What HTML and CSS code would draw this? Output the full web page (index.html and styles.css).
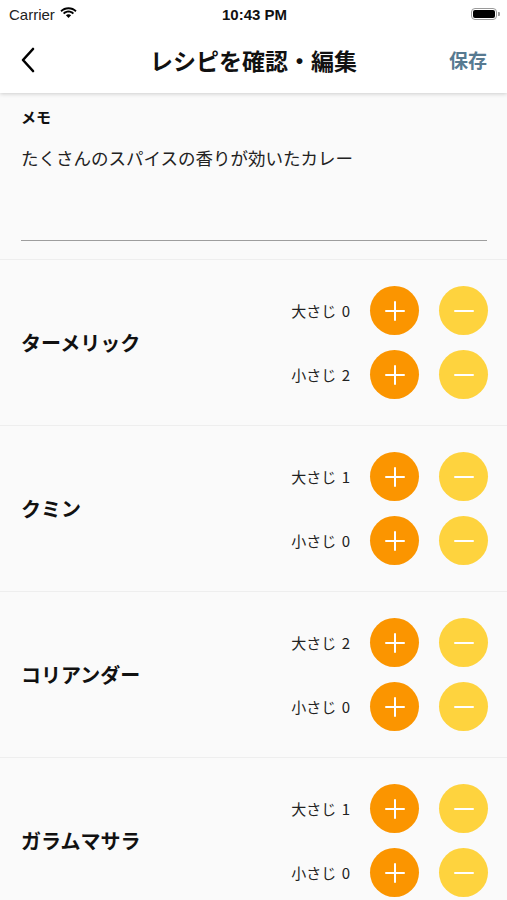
FILE: index.html
```html
<!DOCTYPE html>
<html>
  <head>
    <meta charset="utf-8">
    <link rel="stylesheet" href="styles.css">
  </head>
  <body>
    <div class="header">
      <div class="status-bar">
        <div class="carrier">
          Carrier
          <svg class="wifi" width="17" height="12" viewBox="0 0 17 12">
            <path d="M8.5 2.2c2.6 0 5 1 6.8 2.7l1.3-1.4C14.5 1.4 11.6 0.2 8.5 0.2S2.5 1.4 0.4 3.5l1.3 1.4C3.5 3.2 5.9 2.2 8.5 2.2z" fill="#000"/>
            <path d="M8.5 5.6c1.6 0 3.1 0.6 4.2 1.7l1.3-1.4C12.5 4.5 10.6 3.6 8.5 3.6S4.5 4.5 3 5.9l1.3 1.4C5.4 6.2 6.9 5.6 8.5 5.6z" fill="#000"/>
            <path d="M8.5 7.2c-1 0-1.9 0.4-2.6 1L8.5 11l2.6-2.8c-0.7-0.6-1.6-1-2.6-1z" fill="#000"/>
          </svg>
        </div>
        <div class="time">10:43 PM</div>
        <div class="battery">
          <span class="battery-body"><span class="battery-fill"></span></span>
          <span class="battery-tip"></span>
        </div>
      </div>
      <div class="nav-bar">
        <svg class="back" width="16" height="26" viewBox="0 0 16 26">
          <path d="M13 2L3 13l10 11" fill="none" stroke="#000" stroke-width="2.6" stroke-linecap="round" stroke-linejoin="round"/>
        </svg>
        <div class="nav-title">レシピを確認・編集</div>
        <div class="nav-save">保存</div>
      </div>
    </div>

    <div class="memo">
      <div class="memo-label">メモ</div>
      <div class="memo-field">たくさんのスパイスの香りが効いたカレー</div>
    </div>

    <div class="spice">
      <div class="spice-name">ターメリック</div>
      <div class="amounts">
        <div class="amount">
          <span class="amount-label">大さじ 0</span>
          <button class="btn btn-plus"><span class="bar-h"></span><span class="bar-v"></span></button>
          <button class="btn btn-minus"><span class="bar-h"></span></button>
        </div>
        <div class="amount">
          <span class="amount-label">小さじ 2</span>
          <button class="btn btn-plus"><span class="bar-h"></span><span class="bar-v"></span></button>
          <button class="btn btn-minus"><span class="bar-h"></span></button>
        </div>
      </div>
    </div>

    <div class="spice">
      <div class="spice-name">クミン</div>
      <div class="amounts">
        <div class="amount">
          <span class="amount-label">大さじ 1</span>
          <button class="btn btn-plus"><span class="bar-h"></span><span class="bar-v"></span></button>
          <button class="btn btn-minus"><span class="bar-h"></span></button>
        </div>
        <div class="amount">
          <span class="amount-label">小さじ 0</span>
          <button class="btn btn-plus"><span class="bar-h"></span><span class="bar-v"></span></button>
          <button class="btn btn-minus"><span class="bar-h"></span></button>
        </div>
      </div>
    </div>

    <div class="spice">
      <div class="spice-name">コリアンダー</div>
      <div class="amounts">
        <div class="amount">
          <span class="amount-label">大さじ 2</span>
          <button class="btn btn-plus"><span class="bar-h"></span><span class="bar-v"></span></button>
          <button class="btn btn-minus"><span class="bar-h"></span></button>
        </div>
        <div class="amount">
          <span class="amount-label">小さじ 0</span>
          <button class="btn btn-plus"><span class="bar-h"></span><span class="bar-v"></span></button>
          <button class="btn btn-minus"><span class="bar-h"></span></button>
        </div>
      </div>
    </div>

    <div class="spice">
      <div class="spice-name">ガラムマサラ</div>
      <div class="amounts">
        <div class="amount">
          <span class="amount-label">大さじ 1</span>
          <button class="btn btn-plus"><span class="bar-h"></span><span class="bar-v"></span></button>
          <button class="btn btn-minus"><span class="bar-h"></span></button>
        </div>
        <div class="amount">
          <span class="amount-label">小さじ 0</span>
          <button class="btn btn-plus"><span class="bar-h"></span><span class="bar-v"></span></button>
          <button class="btn btn-minus"><span class="bar-h"></span></button>
        </div>
      </div>
    </div>
  </body>
</html>
```

FILE: styles.css
```css
html,
body {
  margin: 0;
  padding: 0;
}
body {
  width: 507px;
  height: 900px;
  overflow: hidden;
  background-color: #fafafa;
  font-family: "Noto Sans CJK JP", "Noto Sans", sans-serif;
  color: #111;
}

/* header */
.header {
  background-color: #ffffff;
  height: 93px;
  box-shadow: 0 1px 4px rgba(0, 0, 0, 0.18);
  position: relative;
  z-index: 1;
}
.status-bar {
  height: 28px;
  display: flex;
  align-items: center;
  justify-content: space-between;
  padding: 0 7px 0 9px;
  font-family: "Liberation Sans", Arial, sans-serif;
  font-size: 15px;
}
.carrier {
  flex: 1;
  display: flex;
  align-items: center;
  gap: 5px;
  color: #222;
}
.wifi {
  margin-top: -2px;
}
.time {
  font-weight: bold;
  flex: 1;
  text-align: center;
}
.battery {
  flex: 1;
  display: flex;
  justify-content: flex-end;
  align-items: center;
}
.battery-body {
  width: 26px;
  height: 12px;
  border: 1px solid #9a9a9a;
  border-radius: 4px;
  padding: 1px;
  box-sizing: border-box;
  display: flex;
}
.battery-fill {
  flex: 1;
  background-color: #000;
  border-radius: 2px;
}
.battery-tip {
  width: 2px;
  height: 4px;
  background-color: #9a9a9a;
  border-radius: 0 1px 1px 0;
  margin-left: 1px;
}
.nav-bar {
  height: 65px;
  display: flex;
  align-items: center;
  padding: 0 20px 0 20px;
  position: relative;
}
.back {
  margin-top: -2px;
}
.nav-title {
  position: absolute;
  left: 0;
  right: 0;
  text-align: center;
  font-size: 23px;
  font-weight: bold;
  margin-top: -2px;
  pointer-events: none;
}
.nav-save {
  margin-left: auto;
  font-size: 19px;
  font-weight: bold;
  color: #577a91;
  margin-top: -2px;
}

/* memo */
.memo {
  padding: 14px 20px 18px 21px;
  border-bottom: 1px solid #eeeeee;
}
.memo-label {
  font-size: 15px;
  font-weight: bold;
  line-height: 20px;
}
.memo-field {
  margin-top: 19px;
  font-size: 17.5px;
  line-height: 24px;
  height: 94px;
  color: #222;
  border-bottom: 1.5px solid #9e9e9e;
}

/* spice rows */
.spice {
  display: flex;
  align-items: center;
  padding: 26px 19px 26px 21px;
  border-bottom: 1px solid #eeeeee;
}
.spice-name {
  flex: 1;
  font-size: 20px;
  font-weight: bold;
}
.amounts {
  display: flex;
  flex-direction: column;
  gap: 15px;
}
.amount {
  display: flex;
  align-items: center;
  gap: 20px;
}
.amount-label {
  font-size: 15px;
  color: #222;
  word-spacing: 2px;
}
.btn {
  width: 49px;
  height: 49px;
  border: none;
  border-radius: 50%;
  padding: 0;
  position: relative;
}
.btn-plus {
  background-color: #fb9500;
}
.btn-minus {
  background-color: #fed33e;
}
.bar-h,
.bar-v {
  position: absolute;
  left: 50%;
  top: 50%;
  background-color: #ffffff;
  border-radius: 1px;
  transform: translate(-50%, -50%);
}
.bar-h {
  width: 20px;
  height: 2px;
}
.bar-v {
  width: 2px;
  height: 20px;
}
```
